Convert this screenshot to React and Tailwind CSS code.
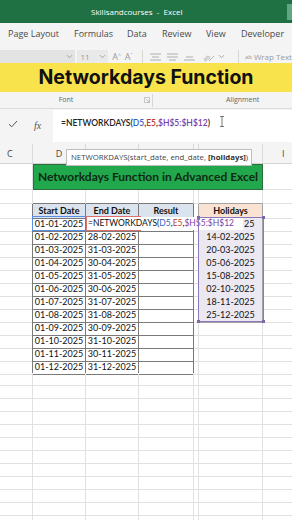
import React from 'react'

const grid = 'grid grid-cols-[33px_53px_53px_55px_5px_64px_1fr]'
const gl = 'border-[#e1e1e1]'
const dark = 'border-[#7a7a7a]'

const starts = ['01-01-2025', '01-02-2025', '01-03-2025', '01-04-2025', '01-05-2025', '01-06-2025', '01-07-2025', '01-08-2025', '01-09-2025', '01-10-2025', '01-11-2025', '01-12-2025']
const ends = ['', '28-02-2025', '31-03-2025', '30-04-2025', '31-05-2025', '30-06-2025', '31-07-2025', '31-08-2025', '30-09-2025', '31-10-2025', '30-11-2025', '31-12-2025']
const holidays = ['01-01-2025', '14-02-2025', '20-03-2025', '05-06-2025', '15-08-2025', '02-10-2025', '18-11-2025', '25-12-2025']

function Chevron({ className }) {
    return (
        <svg width="7" height="5" viewBox="0 0 7 5" className={className}>
            <path d="M1 1.2 L3.5 3.7 L6 1.2" fill="none" stroke="#9a9a9a" strokeWidth="0.9" />
        </svg>
    )
}

function Formula({ paren }) {
    return (
        <>
            <span>=NETWORKDAYS(</span>
            <span className="text-[#2f64c8]">D5</span>
            <span>,</span>
            <span className="text-[#c0392b]">E5</span>
            <span>,</span>
            <span className="text-[#7a3fa8]">$H$5:$H$12</span>
            {paren && <span>)</span>}
        </>
    )
}

function DataRow({ i }) {
    const hasHol = i < holidays.length
    return (
        <div className={`${grid} h-[13px]`}>
            <div className={`border-b ${gl} border-r border-r-[#7a7a7a]`} />
            <div className={`border-r border-b ${dark} flex items-center justify-center`}>{starts[i]}</div>
            <div className={`border-r border-b ${dark} flex items-center justify-center`}>{ends[i]}</div>
            <div className={`border-r border-b ${dark}`} />
            <div className={`border-b ${gl} ${hasHol ? 'border-r border-r-[#a3a3a3]' : 'border-r'}`} />
            {hasHol ? (
                <div className="border-r border-b border-[#a3a3a3] bg-[#ebe8f1] flex items-center justify-center">{i === 0 ? '' : holidays[i]}</div>
            ) : (
                <div className={`border-r border-b ${gl}`} />
            )}
            <div className={`border-b ${gl}`} />
        </div>
    )
}

function BlankRow() {
    return (
        <div className={`${grid} h-[13px]`}>
            {[0, 1, 2, 3, 4, 5].map(k => <div key={k} className={`border-r border-b ${gl}`} />)}
            <div className={`border-b ${gl}`} />
        </div>
    )
}

function Corner({ className }) {
    return <div className={`absolute w-[3px] h-[3px] bg-[#7a68a8] ${className}`} />
}

export default function App() {
    return (
        <div className="relative w-[292px] h-[520px] overflow-hidden bg-white font-['Open_Sans',sans-serif]">
            {/* title bar */}
            <div className="h-[23px] bg-[#1f7144] flex items-center">
                <span className="pl-[91px] text-[8px] text-white">Skillsandcourses&nbsp; - &nbsp;Excel</span>
                <div className="ml-auto mt-[1px] w-[5px] h-[16px] bg-[#5fa77e]" />
            </div>

            {/* menu */}
            <div className="h-[22px] bg-[#f4f4f4] flex items-center pl-[8px] text-[9px] text-[#4a4a4a]">
                <span className="w-[66px]">Page Layout</span>
                <span className="w-[53px]">Formulas</span>
                <span className="w-[35px]">Data</span>
                <span className="w-[44px]">Review</span>
                <span className="w-[35px]">View</span>
                <span>Developer</span>
            </div>

            {/* ribbon controls */}
            <div className="h-[18px] bg-[#f4f4f4] flex items-end text-[#9a9a9a]">
                <div className="w-[81px] h-[13px] bg-[#e3e3e3] flex items-center justify-end pr-[2px]">
                    <Chevron />
                </div>
                <div className="ml-[2px] w-[33px] h-[13px] bg-[#e9e9e9] flex items-center pl-[3px] text-[8px]">
                    <span>11</span>
                    <Chevron className="ml-auto mr-[2px]" />
                </div>
                <div className="ml-[4px] w-[30px] h-[13px] flex items-center gap-[4px] text-[9px]">
                    <span>A<sup className="text-[5px]">^</sup></span>
                    <span>A<sup className="text-[5px]">ˇ</sup></span>
                </div>
                <div className="w-[1px] h-[13px] bg-[#d6d6d6] ml-[2px]" />
                <div className="h-[13px] flex items-center gap-[6px] ml-[7px]">
                    <svg width="11" height="8" viewBox="0 0 11 8"><path d="M0 1h11M2 4h7M0 7h11" stroke="#a0a0a0" strokeWidth="0.8" /></svg>
                    <svg width="11" height="8" viewBox="0 0 11 8"><path d="M0 1h11M0 4h11M2 7h7" stroke="#a0a0a0" strokeWidth="0.8" /></svg>
                    <svg width="11" height="8" viewBox="0 0 11 8"><path d="M2 4h7M0 7h11" stroke="#a0a0a0" strokeWidth="0.8" /></svg>
                    <div className="flex items-center gap-[3px] ml-[2px]">
                        <svg width="12" height="10" viewBox="0 0 12 10"><text x="0" y="8" fontSize="6" fill="#a0a0a0" transform="rotate(-30 4 6)">ab</text><path d="M6 9l5-5" stroke="#a0a0a0" strokeWidth="0.7" /></svg>
                        <Chevron />
                    </div>
                </div>
                <div className="w-[1px] h-[13px] bg-[#d6d6d6] ml-[13px]" />
                <div className="h-[13px] flex items-center ml-[6px] text-[8px] whitespace-nowrap">
                    <span className="text-[6px] leading-none mr-[2px]">ab</span>
                    <span>Wrap Text</span>
                </div>
            </div>

            {/* yellow banner */}
            <div className="h-[29px] bg-[#f8e34c] flex items-center justify-center">
                <span className="font-['Inter',sans-serif] font-bold text-[19.5px] text-[#111]">Networkdays Function</span>
            </div>

            {/* ribbon group labels */}
            <div className="h-[17px] bg-[#f4f4f4] flex items-center text-[7px] text-[#666] border-b border-[#dcdcdc]">
                <span className="w-[132px] text-center">Font</span>
                <svg width="6" height="6" viewBox="0 0 6 6" className="ml-[12px]"><path d="M0.5 0.5h5v5h-5zM2 2l3 3M5 3.5V5H3.5" fill="none" stroke="#aaa" strokeWidth="0.6" /></svg>
                <div className="w-[1px] h-[13px] bg-[#d6d6d6] ml-[2px]" />
                <span className="ml-[73px]">Alignment</span>
            </div>

            {/* formula bar */}
            <div className="h-[35px] bg-[#f4f4f4] flex">
                <div className="w-[53px] flex items-start pt-[9px]">
                    <svg width="10" height="8" viewBox="0 0 10 8" className="ml-[8px] mt-[2px]"><path d="M1 4.2 L3.7 6.8 L9 1" fill="none" stroke="#555" strokeWidth="1" /></svg>
                    <span className="ml-[16px] font-['Liberation_Serif',serif] italic text-[10px] text-[#555]">fx</span>
                </div>
                <div className="flex-1 bg-white mt-[1px] mb-[2px] pl-[8px] pt-[7px] text-[8.5px] font-semibold text-[#222] font-['Lato',sans-serif] relative">
                    <Formula paren />
                    <svg width="6" height="11" viewBox="0 0 6 11" className="absolute left-[166px] top-[6px]"><path d="M1 0.5h4M3 0.5v10M1 10.5h4" stroke="#555" strokeWidth="0.8" fill="none" /></svg>
                </div>
            </div>

            {/* column headers */}
            <div className={`${grid} h-[20px] bg-[#f4f4f4] border-b border-[#d4d4d4] text-[9px] text-[#444]`}>
                <div className="flex items-center pl-[7px] border-r border-[#dadada]">C</div>
                <div className="flex items-center justify-center border-r border-[#dadada]">D</div>
                <div className="border-r border-[#dadada]" />
                <div className="border-r border-[#dadada]" />
                <div className="border-r border-[#dadada]" />
                <div className="border-r border-[#dadada]" />
                <div className="flex items-center pl-[19px]">I</div>
            </div>

            {/* sheet */}
            <div className="relative font-['Lato',sans-serif] text-[9px] text-[#111]">
                <div className={`${grid} h-[26px]`}>
                    <div className={`border-r border-b ${gl}`} />
                    <div className="col-span-5 bg-[#22a84c] border border-[#2f6e3c] flex items-center justify-center overflow-hidden">
                        <span className="font-bold text-[12px] text-[#0e2a14] whitespace-nowrap">Networkdays Function in Advanced Excel</span>
                    </div>
                    <div className={`border-b ${gl}`} />
                </div>
                <div className={`${grid} h-[14px]`}>
                    <div className={`border-r border-b ${gl}`} />
                    <div className={`border-r border-b ${gl} border-b-[#7a7a7a]`} />
                    <div className={`border-r border-b ${gl} border-b-[#7a7a7a]`} />
                    <div className={`border-r border-b ${gl} border-b-[#7a7a7a]`} />
                    <div className={`border-r border-b ${gl}`} />
                    <div className={`border-r border-b ${gl} border-b-[#a3a3a3]`} />
                    <div className={`border-b ${gl}`} />
                </div>
                <div className={`${grid} h-[13px] font-bold`}>
                    <div className={`border-b ${gl} border-r border-r-[#7a7a7a]`} />
                    <div className={`border-r border-b ${dark} bg-[#dae3ee] flex items-center justify-center`}>Start Date</div>
                    <div className={`border-r border-b ${dark} bg-[#dae3ee] flex items-center justify-center`}>End Date</div>
                    <div className={`border-r border-b ${dark} bg-[#dae3ee] flex items-center justify-center`}>Result</div>
                    <div className={`border-b ${gl} border-r border-r-[#a3a3a3]`} />
                    <div className="border-r border-b border-[#a3a3a3] bg-[#fbe3d4] flex items-center justify-center">Holidays</div>
                    <div className={`border-b ${gl}`} />
                </div>
                {starts.map((s, i) => <DataRow key={s} i={i} />)}
                {[0, 1, 2, 3, 4, 5, 6, 7, 8, 9, 10, 11].map(k => <BlankRow key={k} />)}

                {/* reference highlights and edit text */}
                <div className="absolute left-[32px] top-[52px] w-[55px] h-[15px] border border-[#5b8ee6]" />
                <div className="absolute left-[86px] top-[52px] w-[55px] h-[15px] border border-[#e07070]" />
                <div className="absolute left-[87px] top-[53px] w-[156px] h-[13px] bg-white flex items-center pl-[1px] whitespace-nowrap overflow-hidden text-[8.5px]">
                    <Formula />
                </div>
                <div className="absolute left-[244px] top-[54px] h-[12px] flex items-center">25</div>
                <div className="absolute left-[198px] top-[53px] w-[66px] h-[105px] border border-[#8a78ba]">
                    <Corner className="-left-[2px] -top-[2px]" />
                    <Corner className="-right-[2px] -top-[2px]" />
                    <Corner className="-left-[2px] -bottom-[2px]" />
                    <Corner className="-right-[2px] -bottom-[2px]" />
                </div>
            </div>

            {/* function tooltip */}
            <div className="absolute left-[66px] top-[149px] w-[186px] h-[17px] bg-white border border-[#bdbdbd] flex items-center pl-[4px] text-[7.8px] text-[#444] whitespace-nowrap">
                NETWORKDAYS(start_date, end_date,&nbsp;<span className="font-bold text-[#333]">[holidays]</span>)
            </div>
        </div>
    )
}
